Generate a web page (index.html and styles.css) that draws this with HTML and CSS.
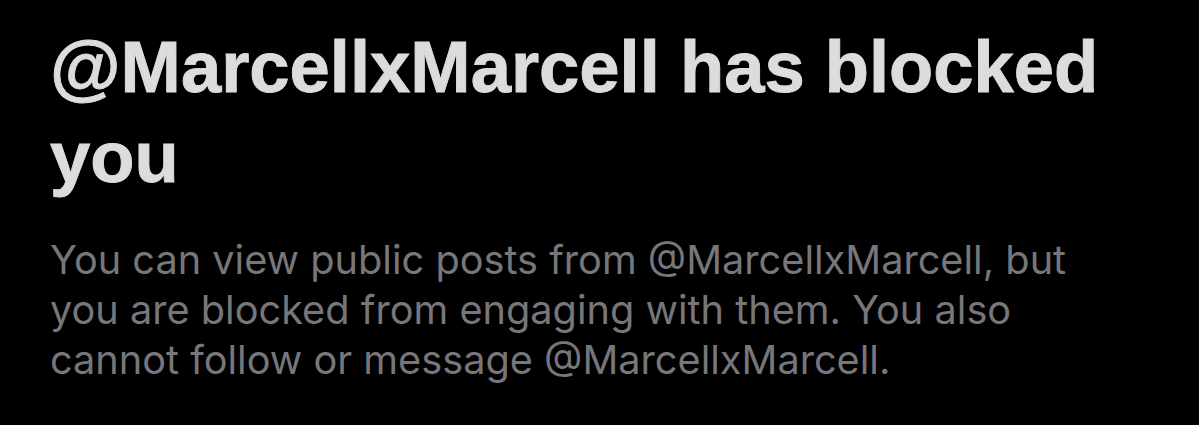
FILE: index.html
```html
<!DOCTYPE html>
<html>
<head>
<meta charset="utf-8">
<link rel="stylesheet" href="styles.css">
</head>
<body>
<main class="blocked">
  <h1 class="title">@MarcellxMarcell has blocked you</h1>
  <p class="desc">You can view public posts from @MarcellxMarcell, but you are blocked from engaging with them. You also cannot follow or message @MarcellxMarcell.</p>
</main>
</body>
</html>
```

FILE: styles.css
```css
html, body {
  margin: 0;
  padding: 0;
  background: #000;
}
.blocked {
  width: 1199px;
  height: 425px;
  box-sizing: border-box;
  padding: 22px 40px 0 50px;
  display: flex;
  flex-direction: column;
  gap: 33px;
}
.title {
  margin: 0;
  font-family: "Liberation Sans", Arial, sans-serif;
  font-weight: 700;
  font-size: 72.4px;
  line-height: 90px;
  color: #dcdcdc;
  -webkit-text-stroke: 0.9px #dcdcdc;
}
.desc {
  margin: 0;
  max-width: 1040px;
  font-family: Inter, "Noto Sans", sans-serif;
  font-weight: 400;
  font-size: 39.7px;
  line-height: 50px;
  color: #76767b;
}
```
